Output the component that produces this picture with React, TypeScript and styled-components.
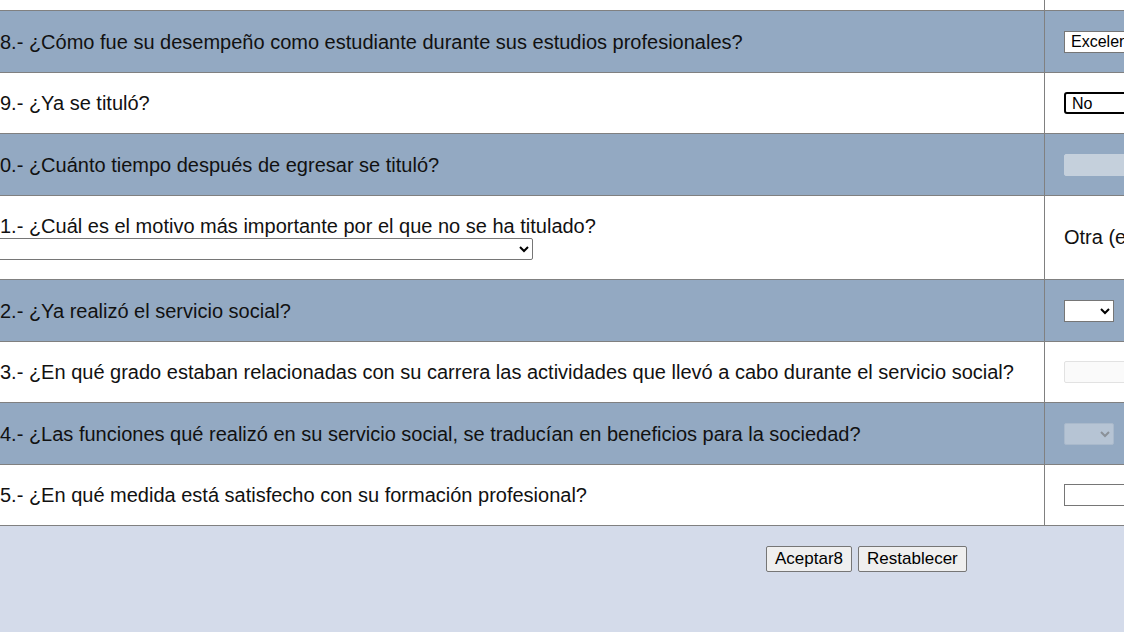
import React from "react";
import styled, { createGlobalStyle } from "styled-components";

const GlobalStyle = createGlobalStyle`
  html, body {
    margin: 0;
    padding: 0;
    overflow: hidden;
    background: #d4dbea;
    font-family: "Liberation Sans", Arial, sans-serif;
  }
`;

const Page = styled.div`
  width: 1124px;
  height: 632px;
  overflow: hidden;
  background: #d4dbea;
`;

const Table = styled.div`
  display: flex;
  flex-direction: column;
  width: 1300px;
`;

const Row = styled.div<{ shade: boolean; tall?: boolean }>`
  display: flex;
  background: ${(p) => (p.shade ? "#93a9c2" : "#ffffff")};
  border-bottom: 1px solid #808080;
  height: ${(p) => (p.tall ? "83px" : p.shade ? "61px" : "60px")};
`;

const TopRow = styled(Row)`
  height: 10px;
`;

const Question = styled.div`
  width: 1044px;
  flex-shrink: 0;
  border-right: 1px solid #808080;
  display: flex;
  flex-direction: column;
  justify-content: center;
  font-size: 20px;
  line-height: 22px;
  color: #111;
  white-space: nowrap;
`;

const Answer = styled.div`
  flex: 1;
  display: flex;
  align-items: center;
  padding-left: 19px;
  font-size: 20px;
  color: #111;
  white-space: nowrap;
`;

const Select = styled.select<{ w: number; focused?: boolean }>`
  width: ${(p) => p.w}px;
  height: 22px;
  box-sizing: border-box;
  font-family: "Liberation Sans", Arial, sans-serif;
  font-size: 16px;
  color: #000;
  background: #fff;
  border: ${(p) => (p.focused ? "2px solid #000" : "1px solid #767676")};
  border-radius: ${(p) => (p.focused ? "3px" : "0")};
  padding: 0 2px;
  margin: 0;
  &:disabled {
    background: #c5d0dd;
    border: 1px solid #b3c0cf;
    border-radius: 2px;
    color: #888;
  }
`;

const WideSelect = styled(Select)`
  margin-top: 1px;
  margin-left: -4px;
  border-radius: 2px;
`;

const Input = styled.input<{ onShade?: boolean }>`
  width: 120px;
  height: 22px;
  box-sizing: border-box;
  font-family: "Liberation Sans", Arial, sans-serif;
  font-size: 16px;
  margin: 0;
  padding: 0 2px;
  background: #fff;
  border: 1px solid #767676;
  &:disabled {
    background: ${(p) => (p.onShade ? "#c5d0dc" : "#fafafa")};
    border: 1px solid ${(p) => (p.onShade ? "#c5d0dc" : "#e2e2e2")};
    border-radius: 2px;
  }
`;

const Footer = styled.div`
  display: flex;
  gap: 6px;
  padding: 20px 0 0 766px;
`;

const Button = styled.button`
  height: 26px;
  padding: 0 8px;
  font-family: "Liberation Sans", Arial, sans-serif;
  font-size: 17px;
  color: #000;
  background: #efefef;
  border: 1px solid #767676;
  border-radius: 2px;
`;

export default function App() {
  return (
    <Page>
      <GlobalStyle />
      <Table>
        <TopRow shade={false}>
          <Question />
          <Answer />
        </TopRow>
        <Row shade>
          <Question>8.- ¿Cómo fue su desempeño como estudiante durante sus estudios profesionales?</Question>
          <Answer>
            <Select w={120} defaultValue="e">
              <option value="e">Excelente</option>
            </Select>
          </Answer>
        </Row>
        <Row shade={false}>
          <Question>9.- ¿Ya se tituló?</Question>
          <Answer>
            <Select w={120} focused defaultValue="n">
              <option value="n">No</option>
            </Select>
          </Answer>
        </Row>
        <Row shade>
          <Question>0.- ¿Cuánto tiempo después de egresar se tituló?</Question>
          <Answer>
            <Input onShade disabled />
          </Answer>
        </Row>
        <Row shade={false} tall>
          <Question>
            <span>1.- ¿Cuál es el motivo más importante por el que no se ha titulado?</span>
            <WideSelect w={537}>
              <option value=""></option>
            </WideSelect>
          </Question>
          <Answer>Otra (especifique)</Answer>
        </Row>
        <Row shade>
          <Question>2.- ¿Ya realizó el servicio social?</Question>
          <Answer>
            <Select w={50}>
              <option value=""></option>
            </Select>
          </Answer>
        </Row>
        <Row shade={false}>
          <Question>3.- ¿En qué grado estaban relacionadas con su carrera las actividades que llevó a cabo durante el servicio social?</Question>
          <Answer>
            <Input disabled />
          </Answer>
        </Row>
        <Row shade>
          <Question>4.- ¿Las funciones qué realizó en su servicio social, se traducían en beneficios para la sociedad?</Question>
          <Answer>
            <Select w={50} disabled>
              <option value=""></option>
            </Select>
          </Answer>
        </Row>
        <Row shade={false}>
          <Question>5.- ¿En qué medida está satisfecho con su formación profesional?</Question>
          <Answer>
            <Input />
          </Answer>
        </Row>
      </Table>
      <Footer>
        <Button>Aceptar8</Button>
        <Button>Restablecer</Button>
      </Footer>
    </Page>
  );
}
